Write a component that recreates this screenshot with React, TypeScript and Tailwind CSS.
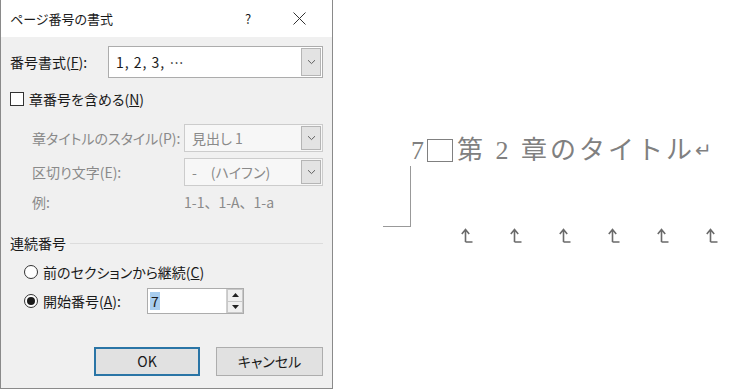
import React from 'react';

const ui = "[font-family:'Noto_Sans_CJK_JP','Noto_Sans',sans-serif] [font-feature-settings:'palt']";

function Chevron() {
  return (
    <svg width="9" height="6" viewBox="0 0 9 6" className="text-[#606060]">
      <path d="M1 1.2 L4.5 4.6 L8 1.2" fill="none" stroke="currentColor" strokeWidth="1" />
    </svg>
  );
}

function Select({ value, disabled, className }: { value: string; disabled?: boolean; className: string }) {
  return (
    <div
      className={`flex items-stretch border ${disabled ? 'bg-[#f7f7f7] border-[#cccccc] text-[#8a8a8a]' : 'bg-white border-[#acacac] text-[#1a1a1a]'} ${className}`}
    >
      <div className="flex-1 flex items-center pl-[7px] text-[14px]">{value}</div>
      <div className="w-[20px] my-[1px] mr-[1px] flex items-center justify-center bg-[#e3e3e3] border border-[#b5b5b5]">
        <Chevron />
      </div>
    </div>
  );
}

function Radio({ checked }: { checked?: boolean }) {
  return (
    <span className="w-[14px] h-[14px] rounded-full border border-[#333] bg-white flex items-center justify-center">
      {checked && <span className="w-[8px] h-[8px] rounded-full bg-[#1a1a1a]" />}
    </span>
  );
}

function Mark() {
  return (
    <svg width="13" height="15" viewBox="0 0 13 15" className="text-[#6a6a6a]">
      <path d="M4.5 14 L4.5 1.8 M0.8 6 L4.5 1.5 L8.2 6 M4.5 14 L11.5 14" fill="none" stroke="currentColor" strokeWidth="1.6" />
    </svg>
  );
}

export default function App() {
  return (
    <div className={`w-[750px] h-[389px] bg-white flex ${ui}`}>
      {/* Dialog */}
      <div className="w-[333px] h-[389px] border-x border-b border-[#8a8a8a] flex flex-col text-[#1a1a1a]">
        {/* Title bar */}
        <div className="h-[37px] bg-white flex items-center pl-[9px] pr-[26px] text-[13px]">
          <span className="flex-1">ページ番号の書式</span>
          <span className="w-[14px] text-center mr-[38px]">?</span>
          <svg width="13" height="13" viewBox="0 0 13 13">
            <path d="M0.5 0.5 L12.5 12.5 M12.5 0.5 L0.5 12.5" stroke="#333" strokeWidth="1" />
          </svg>
        </div>

        {/* Body */}
        <div className="flex-1 bg-[#f0f0f0] px-[9px] flex flex-col text-[14px]">
          <div className="mt-[9px] h-[32px] flex items-center">
            <span className="w-[98px]">
              番号書式(<span className="underline">F</span>):
            </span>
            <Select value="1, 2, 3, …" className="flex-1 h-[32px] [font-feature-settings:normal] tracking-[1px]" />
          </div>

          <div className="mt-[11px] h-[20px] flex items-center">
            <span className="w-[14px] h-[14px] border border-[#333] bg-white" />
            <span className="ml-[5px]">
              章番号を含める(<span className="underline">N</span>)
            </span>
          </div>

          <div className="mt-[15px] h-[28px] flex items-center pl-[22px] text-[#8a8a8a]">
            <span className="w-[152px]">章タイトルのスタイル(P):</span>
            <Select value="見出し 1" disabled className="flex-1 h-[28px]" />
          </div>

          <div className="mt-[6px] h-[28px] flex items-center pl-[22px] text-[#8a8a8a]">
            <span className="w-[152px]">区切り文字(E):</span>
            <Select value="-　(ハイフン)" disabled className="flex-1 h-[28px]" />
          </div>

          <div className="mt-[6px] h-[20px] flex items-center pl-[22px] text-[#8a8a8a]">
            <span className="w-[152px]">例:</span>
            <span className="[font-feature-settings:normal]">1-1、1-A、1-a</span>
          </div>

          <div className="mt-[21px] h-[20px] flex items-center">
            <span>連続番号</span>
            <span className="flex-1 ml-[4px] h-px bg-[#dcdcdc]" />
          </div>

          <div className="mt-[9px] h-[20px] flex items-center pl-[14px]">
            <Radio />
            <span className="ml-[5px]">
              前のセクションから継続(<span className="underline">C</span>)
            </span>
          </div>

          <div className="mt-[6px] h-[26px] flex items-center pl-[14px]">
            <Radio checked />
            <span className="ml-[5px] w-[104px]">
              開始番号(<span className="underline">A</span>):
            </span>
            <div className="w-[97px] h-[26px] bg-white border border-[#acacac] flex items-stretch">
              <div className="flex-1 flex items-center pl-[2px]">
                <span className="bg-[#a8cdee] px-[1px] leading-[18px]">7</span>
              </div>
              <div className="w-[17px] flex flex-col border-l border-[#d0d0d0]">
                <div className="flex-1 flex items-center justify-center bg-[#f0f0f0] border border-[#c8c8c8]">
                  <svg width="7" height="4" viewBox="0 0 7 4"><path d="M0 4 L3.5 0 L7 4 Z" fill="#222" /></svg>
                </div>
                <div className="flex-1 flex items-center justify-center bg-[#f0f0f0] border border-t-0 border-[#c8c8c8]">
                  <svg width="7" height="4" viewBox="0 0 7 4"><path d="M0 0 L3.5 4 L7 0 Z" fill="#222" /></svg>
                </div>
              </div>
            </div>
          </div>

          <div className="mt-[33px] flex justify-end gap-[16px]">
            <button className="w-[106px] h-[29px] bg-[#e1e1e1] border-2 border-[#2a75a6] text-[14px]">OK</button>
            <button className="w-[107px] h-[29px] bg-[#e1e1e1] border border-[#adadad] text-[14px]">キャンセル</button>
          </div>
        </div>
      </div>

      {/* Document preview */}
      <div className="flex-1 pl-[50px] pt-[134px] text-[#808080]">
        <div className="ml-[28px] flex items-center h-[32px] text-[26px] [font-family:'Liberation_Serif','Noto_Sans_CJK_JP',serif] [font-feature-settings:normal]">
          <span>7</span>
          <span className="w-[26px] h-[23px] border border-[#808080] ml-[3px] mr-[4px]" />
          <span className="tracking-[3px]">第 2 章のタイトル</span>
          <span className="text-[20px]">↵</span>
        </div>
        <div className="flex items-end">
          <div className="w-[28px] h-[61px] border-r border-b border-[#999]" />
          <div className="flex gap-[36px] ml-[50px] mb-[-16px]">
            <Mark />
            <Mark />
            <Mark />
            <Mark />
            <Mark />
            <Mark />
          </div>
        </div>
      </div>
    </div>
  );
}
